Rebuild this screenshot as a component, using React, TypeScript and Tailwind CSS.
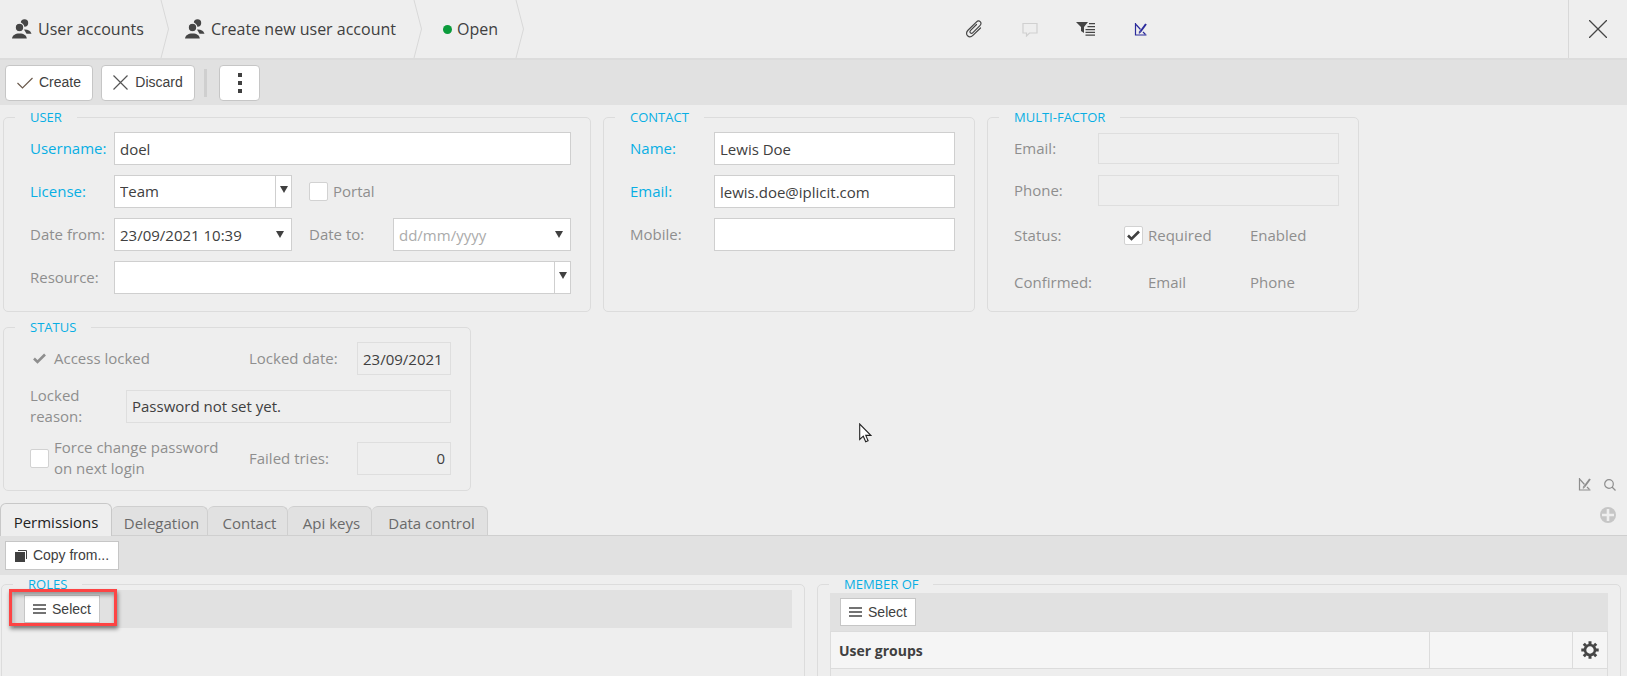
import React from 'react';
import type { ReactNode } from 'react';
import clsx from 'clsx';

const labelBase = 'text-[15px] leading-[21px]';
const inputBase = 'w-full min-w-0 border px-[5px] text-[15px] outline-none';
const editable = 'h-[33px] border-[#cfcfcf] bg-white text-[#404040] placeholder:text-[#ababab]';
const readonlyBox = 'border-[#dedede] bg-transparent text-[#404040]';

const UsersIcon = () => (
  <svg width="20" height="20" viewBox="0 0 20 20" fill="#454545" aria-hidden="true">
    <circle cx="12.5" cy="4" r="3.7" />
    <path d="M12 10.5c3.500-.3 6.500 1 7.500 4.200h-5z" />
    <circle cx="7.500" cy="8.500" r="4.300" stroke="#eee" strokeWidth="1.200" />
    <path d="M0 19.500c.3-3 3-5 7.500-5s7 2 7.300 5z" />
  </svg>
);

const EditIcon = ({ color }: { color: string }) => (
  <svg width="13" height="13" viewBox="0 0 13 13" fill="none" stroke={color} aria-hidden="true">
    <path d="M1.500 0v12H12.500" strokeWidth="1.200" />
    <path d="M2 1.500l4.500 5M9 9l2.500 2.500" strokeWidth="1.200" />
    <path d="M12 1L6.500 8.500" strokeWidth="2" />
    <path d="M5 10.500l.5-2.500 1.500 1z" fill={color} strokeWidth=".5" />
  </svg>
);

const CheckIcon = ({ className }: { className?: string }) => (
  <svg width="13" height="11" viewBox="0 0 13 11" fill="none" stroke="currentColor" strokeWidth="2.600" className={className} aria-hidden="true">
    <path d="M1 5.500l3.500 3.500L12 1.500" />
  </svg>
);

const Arrow = () => (
  <svg width="8" height="7" viewBox="0 0 8 7" fill="#404040" aria-hidden="true">
    <path d="M0 0h8L4 7z" />
  </svg>
);

const MenuIcon = () => (
  <svg width="13" height="10" viewBox="0 0 13 10" stroke="#454545" strokeWidth="1.500" aria-hidden="true">
    <path d="M0 1h13M0 5h13M0 9h13" />
  </svg>
);

const Crumb = ({ children, className }: { children: ReactNode; className?: string }) => (
  <li className="flex">
    <a href="#" className={clsx('flex items-center text-[16px] text-[#404040]', className)}>{children}</a>
    <svg width="10" height="58" viewBox="0 0 10 58" fill="none" stroke="#d8d8d8" aria-hidden="true">
      <path d="M1 0l7.500 29L1 58" />
    </svg>
  </li>
);

const Panel = ({ title, className, children }: { title: string; className?: string; children?: ReactNode }) => (
  <fieldset className={clsx('min-w-0 rounded-[5px] border border-[#dcdcdc]', className)}>
    <legend className="ml-[11px] px-[15px] text-[13px] leading-[18px] text-[#08aee4]">{title}</legend>
    {children}
  </fieldset>
);

const Label = ({ htmlFor, required, className, children }: { htmlFor: string; required?: boolean; className?: string; children: ReactNode }) => (
  <label htmlFor={htmlFor} className={clsx(labelBase, 'shrink-0', required ? 'text-[#08aee4]' : 'text-[#8e8e8e]', className)}>
    {children}
  </label>
);

const Check = ({ id, label, boxed, checked, className }: { id: string; label: string; boxed?: boolean; checked?: boolean; className?: string }) => (
  <div className={clsx('flex shrink-0 items-center gap-[5px]', className)}>
    <span className="grid shrink-0 place-items-center">
      <input
        id={id}
        type="checkbox"
        defaultChecked={checked}
        disabled={!boxed}
        className={clsx('col-start-1 row-start-1 size-[19px] appearance-none rounded-[2px]', boxed && 'border border-[#d2d2d2] bg-white')}
      />
      {checked && <CheckIcon className={clsx('pointer-events-none col-start-1 row-start-1', boxed ? 'text-[#404040]' : 'text-[#8e8e8e]')} />}
    </span>
    <label htmlFor={id} className={clsx(labelBase, 'text-[#8e8e8e]')}>{label}</label>
  </div>
);

const Select = ({ id, options, className }: { id: string; options: string[]; className?: string }) => (
  <div className={clsx('relative', className)}>
    <select id={id} className={clsx(inputBase, editable, 'appearance-none')}>
      {options.map((o) => <option key={o}>{o}</option>)}
    </select>
    <span className="pointer-events-none absolute inset-y-0 right-0 flex w-[17px] items-center justify-center border border-[#cfcfcf] pb-1">
      <Arrow />
    </span>
  </div>
);

const DateField = ({ id, value }: { id: string; value?: string }) => (
  <div className="relative w-[178px]">
    <input id={id} type="text" defaultValue={value} placeholder="dd/mm/yyyy" className={clsx(inputBase, editable)} />
    <button type="button" aria-label="Open calendar" className="absolute inset-y-0 right-0 flex w-6 items-center justify-center">
      <Arrow />
    </button>
  </div>
);

const ToolButton = ({ className, children, label }: { className?: string; children: ReactNode; label?: string }) => (
  <button
    type="button"
    aria-label={label}
    className={clsx('flex items-center justify-center border border-[#c6c6c6] bg-white font-["Liberation_Sans",Arial,sans-serif] text-[14px] text-[#404040]', className)}
  >
    {children}
  </button>
);

const Header = () => (
  <header className="flex h-[60px] border-b-2 border-[#dcdcdc]">
    <ol className="flex">
      <Crumb className="w-[160px] gap-[6px] pl-3"><UsersIcon />User accounts</Crumb>
      <Crumb className="w-[243px] gap-[6px] pl-[15px]"><UsersIcon />Create new user account</Crumb>
      <Crumb className="w-[92px] gap-[5px] pl-5"><span className="size-[9px] rounded-full bg-[#0a9b3b]" />Open</Crumb>
    </ol>
    <div className="flex flex-1 items-center justify-center gap-[38px] pl-[18px]">
      <button type="button" aria-label="Attachments">
        <svg width="20" height="20" viewBox="0 0 20 20" fill="none" stroke="#454545" strokeWidth="1.200" strokeLinecap="round">
          <path d="M12.500 5.500L6.600 11.400c-.9.900-.9 2 0 2.600.8.600 1.500.4 2.300-.4l7-7c1.400-1.400 1.400-3 .3-4-1.200-1-2.600-.8-3.900.5L4 11.300c-1.800 1.800-1.900 4-.4 5.500 1.500 1.400 3.600 1.200 5.300-.5L16.500 9" />
        </svg>
      </button>
      <button type="button" aria-label="Comments">
        <svg width="16" height="15" viewBox="0 0 16 15" fill="none" stroke="#d0d0d0" strokeWidth="1.200">
          <path d="M1 1.500h14v9.500H7.500L4.500 14v-3H1z" />
        </svg>
      </button>
      <button type="button" aria-label="Filter">
        <svg width="20" height="14" viewBox="0 0 20 14" fill="#454545">
          <path d="M0 0h12L8 5v6L5 9V5z" />
          <path d="M13 1h6v1.300h-6zM11.500 4H19v1.300h-7.500zM9.500 7H19v1.300H9.500zM9.500 9.800H19v1.300H9.500zM9.500 12.500H19v1.300H9.500z" />
        </svg>
      </button>
      <button type="button" aria-label="Edit layout"><EditIcon color="#2b2b9c" /></button>
    </div>
    <button type="button" aria-label="Close" className="flex w-[59px] items-center justify-center border-l border-[#d8d8d8]">
      <svg width="18" height="18" viewBox="0 0 18 18" stroke="#454545" strokeWidth="1.300">
        <path d="M0 0l18 18M18 0L0 18" />
      </svg>
    </button>
  </header>
);

const Toolbar = () => (
  <div className="flex h-[45px] items-center gap-2 bg-[#e1e1e1] px-[5px]">
    <ToolButton className="h-9 w-[88px] gap-[6px] rounded">
      <svg width="16" height="12" viewBox="0 0 16 12" fill="none" stroke="#6b5a4c" strokeWidth="1.200">
        <path d="M.5 6l5 5L15.500 1" />
      </svg>
      Create
    </ToolButton>
    <ToolButton className="h-9 w-[94px] gap-[7px] rounded">
      <svg width="15" height="15" viewBox="0 0 15 15" stroke="#555" strokeWidth="1.200">
        <path d="M.5.5l14 14M14.500.5l-14 14" />
      </svg>
      Discard
    </ToolButton>
    <span className="ml-px h-7 w-[3px] bg-[#cfcfcf]" />
    <ToolButton label="More actions" className="ml-1 h-9 w-[41px] rounded">
      <svg width="4" height="20" viewBox="0 0 4 20" fill="#404040">
        <path d="M0 0h4v4H0zM0 8h4v4H0zM0 16h4v4H0z" />
      </svg>
    </ToolButton>
  </div>
);

const UserPanel = () => (
  <Panel title="USER" className="w-[588px] pr-[19px] pb-[17px]">
    <div className="flex flex-col gap-[10px] pt-[6px] pl-[26px]">
      <div className="flex items-center">
        <Label htmlFor="username" required className="w-[84px]">Username:</Label>
        <input id="username" type="text" defaultValue="doel" className={clsx(inputBase, editable)} />
      </div>
      <div className="flex items-center">
        <Label htmlFor="license" required className="w-[84px]">License:</Label>
        <Select id="license" options={['Team']} className="w-[178px]" />
        <Check id="portal" label="Portal" boxed className="ml-[17px]" />
      </div>
      <div className="flex items-center">
        <Label htmlFor="date-from" className="w-[84px]">Date from:</Label>
        <DateField id="date-from" value="23/09/2021 10:39" />
        <Label htmlFor="date-to" className="ml-[17px] w-[84px]">Date to:</Label>
        <DateField id="date-to" />
      </div>
      <div className="flex items-center">
        <Label htmlFor="resource" className="w-[84px]">Resource:</Label>
        <Select id="resource" options={['']} className="flex-1" />
      </div>
    </div>
  </Panel>
);

const ContactPanel = () => (
  <Panel title="CONTACT" className="w-[372px] pr-[19px]">
    <div className="flex flex-col gap-[10px] pt-[6px] pl-[26px]">
      <div className="flex items-center">
        <Label htmlFor="name" required className="w-[84px]">Name:</Label>
        <input id="name" type="text" defaultValue="Lewis Doe" className={clsx(inputBase, editable)} />
      </div>
      <div className="flex items-center">
        <Label htmlFor="email" required className="w-[84px]">Email:</Label>
        <input id="email" type="text" defaultValue="lewis.doe@iplicit.com" className={clsx(inputBase, editable)} />
      </div>
      <div className="flex items-center">
        <Label htmlFor="mobile" className="w-[84px]">Mobile:</Label>
        <input id="mobile" type="text" className={clsx(inputBase, editable)} />
      </div>
    </div>
  </Panel>
);

const MultiFactorPanel = () => (
  <Panel title="MULTI-FACTOR" className="w-[372px] pr-[19px]">
    <div className="flex flex-col gap-[11px] pt-[7px] pl-[26px]">
      <div className="flex items-center">
        <Label htmlFor="mfa-email" className="w-[84px]">Email:</Label>
        <input id="mfa-email" type="text" readOnly className={clsx(inputBase, readonlyBox, 'h-[31px]')} />
      </div>
      <div className="flex items-center">
        <Label htmlFor="mfa-phone" className="w-[84px]">Phone:</Label>
        <input id="mfa-phone" type="text" readOnly className={clsx(inputBase, readonlyBox, 'h-[31px]')} />
      </div>
      <div className="flex h-9 items-center">
        <span className={clsx(labelBase, 'w-[110px] text-[#8e8e8e]')}>Status:</span>
        <Check id="mfa-required" label="Required" boxed checked className="w-[102px]" />
        <Check id="mfa-enabled" label="Enabled" />
      </div>
      <div className="flex h-9 items-center">
        <span className={clsx(labelBase, 'w-[110px] text-[#8e8e8e]')}>Confirmed:</span>
        <Check id="confirmed-email" label="Email" className="w-[102px]" />
        <Check id="confirmed-phone" label="Phone" />
      </div>
    </div>
  </Panel>
);

const StatusPanel = () => (
  <Panel title="STATUS" className="w-[468px] pr-[19px] pb-[11px]">
    <div className="flex flex-col gap-[10px] pt-[6px] pl-[26px]">
      <div className="flex items-center">
        <Check id="locked" label="Access locked" checked className="w-[219px]" />
        <Label htmlFor="locked-date" className="w-[108px]">Locked date:</Label>
        <input id="locked-date" type="text" readOnly value="23/09/2021" className={clsx(inputBase, readonlyBox, 'h-[33px]')} />
      </div>
      <div className="flex items-center">
        <Label htmlFor="locked-reason" className="w-[96px] pr-5">Locked reason:</Label>
        <input id="locked-reason" type="text" readOnly value="Password not set yet." className={clsx(inputBase, readonlyBox, 'h-[33px]')} />
      </div>
      <div className="flex items-center">
        <Check id="force-change" label="Force change password on next login" boxed className="w-[219px] pr-6" />
        <Label htmlFor="failed-tries" className="w-[108px]">Failed tries:</Label>
        <input id="failed-tries" type="text" readOnly value="0" className={clsx(inputBase, readonlyBox, 'h-[33px] text-right')} />
      </div>
    </div>
  </Panel>
);

const tabs = [
  { name: 'Delegation', width: 'w-24' },
  { name: 'Contact', width: 'w-20' },
  { name: 'Api keys', width: 'w-21' },
  { name: 'Data control', width: 'w-29' },
];

const Tabs = () => (
  <div className="mt-3 flex h-[33px] items-end border-b border-[#cfcfcf]">
    <div role="tablist" className="flex items-end">
      <button type="button" role="tab" aria-selected="true" className="-mb-px h-[33px] w-28 rounded-t-md border border-b-0 border-[#c8c8c8] bg-[#eee] pt-1 text-[15px] text-[#222]">
        Permissions
      </button>
      {tabs.map((t) => (
        <button key={t.name} type="button" role="tab" aria-selected="false" className={clsx('h-[29px] rounded-t-md border-t border-r border-[#cfcfcf] bg-[#e1e1e1] pt-1 pl-1 text-[15px] text-[#6a6a6a]', t.width)}>
          {t.name}
        </button>
      ))}
    </div>
    <button type="button" aria-label="Add tab" className="mr-[11px] mb-3 ml-auto">
      <svg width="16" height="16" viewBox="0 0 16 16">
        <circle cx="8" cy="8" r="8" fill="#c6c6c6" />
        <path d="M8 2v12M2 8h12" stroke="#eee" strokeWidth="2.600" />
      </svg>
    </button>
  </div>
);

const SelectButton = () => (
  <ToolButton className="h-7 w-[76px] gap-[6px]"><MenuIcon />Select</ToolButton>
);

const RolesPanel = () => (
  <Panel title="ROLES" className="min-h-[200px] flex-1">
    <div className="relative mx-3 -mt-[3px] flex h-[38px] items-center bg-[#e1e1e1] pl-[10px]">
      <SelectButton />
      {/* highlight around the select button */}
      <div className="pointer-events-none absolute -top-px -left-[5px] h-[37px] w-[108px] border-3 border-[#fd4444] shadow-[1px_3px_4px_rgba(0,0,0,0.45),inset_1px_3px_4px_rgba(0,0,0,0.35)]" />
    </div>
  </Panel>
);

const MemberPanel = () => (
  <Panel title="MEMBER OF" className="min-h-[200px] flex-1">
    <div className="mx-3">
      <div className="flex h-[38px] items-center bg-[#e1e1e1] pl-[10px]">
        <SelectButton />
      </div>
      <table className="w-full table-fixed border-collapse border border-[#dcdcdc]">
        <thead>
          <tr className="h-[37px] bg-[#f5f5f5]">
            <th className="border border-[#dcdcdc] px-2 text-left text-[14px] font-bold text-[#404040]">User groups</th>
            <th className="w-[143px] border border-[#dcdcdc]" />
            <th className="w-[35px] border border-[#dcdcdc] p-0">
              <button type="button" aria-label="Grid settings" className="flex w-full justify-center">
                <svg width="18" height="18" viewBox="-9 -9 18 18" fill="none" stroke="#454545">
                  <circle r="5" strokeWidth="2.600" />
                  <path d="M0-6v-2.700M0 6v2.700M-6 0h-2.700M6 0h2.700M-4.200-4.200l-2-2M4.200-4.200l2-2M-4.200 4.200l-2 2M4.200 4.200l2 2" strokeWidth="3" />
                </svg>
              </button>
            </th>
          </tr>
        </thead>
        <tbody>
          <tr className="h-[120px]"><td colSpan={3} /></tr>
        </tbody>
      </table>
    </div>
  </Panel>
);

const App = () => (
  <div className='relative h-screen overflow-hidden bg-[#eee] font-["Open_Sans","Noto_Sans",sans-serif]'>
    <Header />
    <Toolbar />
    <main>
      <div className="flex pt-[3px] pl-[3px]">
        <div className="flex flex-1 flex-wrap gap-x-3 gap-y-[6px]">
          <UserPanel />
          <ContactPanel />
          <MultiFactorPanel />
          <StatusPanel />
        </div>
        <div className="flex items-center gap-[13px] self-end pr-[11px]">
          <button type="button" aria-label="Edit layout"><EditIcon color="#8e8e8e" /></button>
          <button type="button" aria-label="Search">
            <svg width="12" height="12" viewBox="0 0 12 12" fill="none" stroke="#8e8e8e" strokeWidth="1.200">
              <circle cx="5" cy="5" r="4.300" />
              <path d="M8 8l3.500 3.500" />
            </svg>
          </button>
        </div>
      </div>
      <Tabs />
      <div className="flex h-[39px] items-center bg-[#e1e1e1] pl-[5px]">
        <ToolButton className="h-[29px] w-[114px] gap-[6px]">
          <svg width="12" height="12" viewBox="0 0 12 12">
            <path d="M3 .5h8.500V9" fill="none" stroke="#454545" />
            <path d="M0 2h10v10H0z" fill="#404040" />
          </svg>
          Copy from...
        </ToolButton>
      </div>
      <div className="flex gap-3 pr-[6px] pl-px">
        <RolesPanel />
        <MemberPanel />
      </div>
    </main>
    {/* mouse pointer */}
    <svg className="pointer-events-none absolute top-[423px] left-[859px]" width="13" height="20" viewBox="0 0 13 20" fill="#fff" stroke="#222" strokeWidth="1.100">
      <path d="M.7 1v15.500l3.600-3.300 2.400 5.500 2.400-1-2.300-5.300h5z" />
    </svg>
  </div>
);

export default App;
